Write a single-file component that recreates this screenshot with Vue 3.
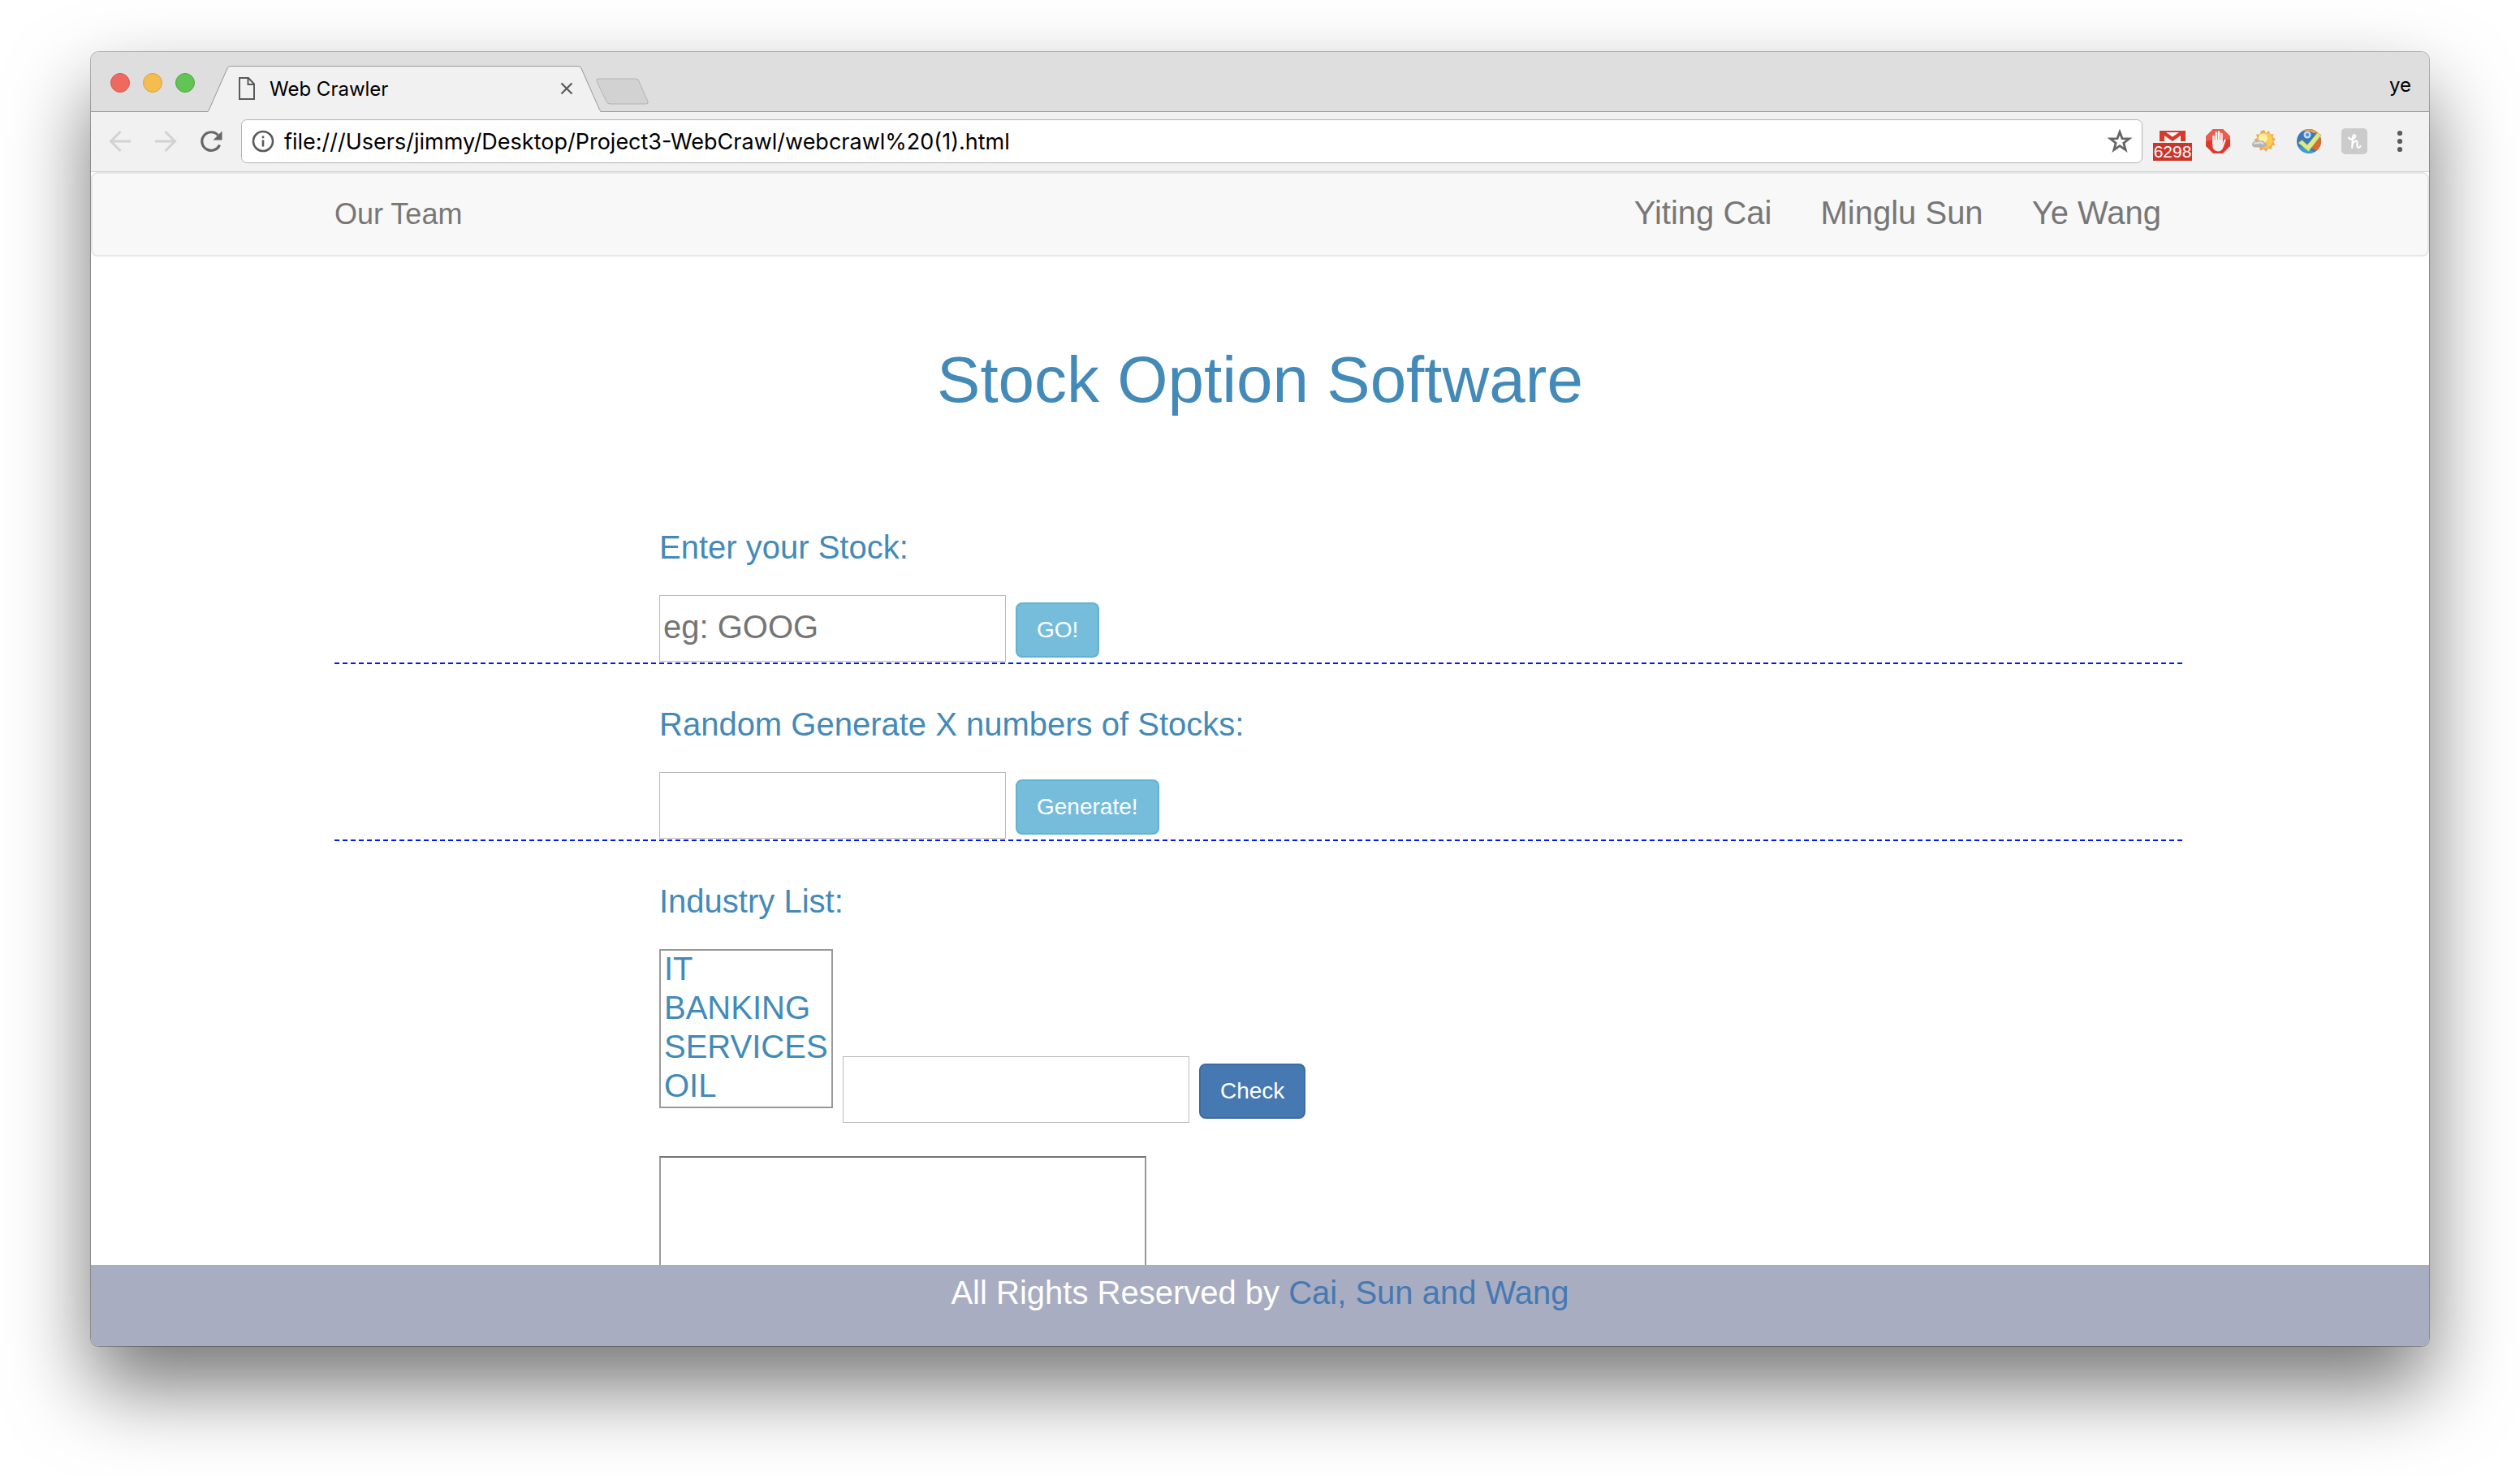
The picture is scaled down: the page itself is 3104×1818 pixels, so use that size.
<script setup>
import { ref } from 'vue'

const url = ref('file:///Users/jimmy/Desktop/Project3-WebCrawl/webcrawl%20(1).html')
const team = ['Yiting Cai', 'Minglu Sun', 'Ye Wang']
const industries = ['IT', 'BANKING', 'SERVICES', 'OIL']
const stock = ref('')
const count = ref('')
const picked = ref([])
const industry = ref('')
const output = ref('')
</script>

<template>
  <div class="desktop">
    <div class="window">
      <header class="tabstrip">
        <div class="lights">
          <button class="light red" aria-label="Close window"></button>
          <button class="light amber" aria-label="Minimize window"></button>
          <button class="light green" aria-label="Zoom window"></button>
        </div>
        <div class="tab">
          <svg class="tab-edge" width="28" height="57" viewBox="0 0 28 57" aria-hidden="true">
            <path d="M0 57 L1 56 L25 3 Q26 0.500 28 0.500 V57 Z" fill="#f1f1f1" />
            <path d="M0 55.500 Q1 55.500 2 53 L24 3 Q25 0.500 28 0.500" fill="none" stroke="#9a9a9a" />
          </svg>
          <div class="tab-body">
            <svg width="20" height="28" viewBox="0 0 20 28" fill="none" stroke="#5a5a5a" stroke-width="2" aria-hidden="true">
              <path d="M1 1 H12 L19 8.500 V27 H1 Z M11.500 1 V9 H19" />
            </svg>
            <span class="tab-title">Web Crawler</span>
            <button class="tab-close" aria-label="Close tab">
              <svg width="16" height="16" viewBox="0 0 16 16" stroke="#5a5a5a" stroke-width="2.200" aria-hidden="true">
                <path d="M1.500 1.500 L14.500 14.500 M14.500 1.500 L1.500 14.500" />
              </svg>
            </button>
          </div>
          <svg class="tab-edge" width="28" height="57" viewBox="0 0 28 57" aria-hidden="true">
            <path d="M28 57 L27 56 L3 3 Q2 0.500 0 0.500 V57 Z" fill="#f1f1f1" />
            <path d="M28 55.500 Q27 55.500 26 53 L4 3 Q3 0.500 0 0.500" fill="none" stroke="#9a9a9a" />
          </svg>
        </div>
        <button class="new-tab" aria-label="New tab">
          <svg width="68" height="34" viewBox="0 0 68 34" aria-hidden="true">
            <path d="M5 1 H51 Q54 1 55 4 L66 29 Q67 32 64 32 H19 Q16 32 15 29 L3 4 Q2 1 5 1 Z" fill="#d2d2d2" stroke="#b2b2b2" />
          </svg>
        </button>
        <span class="profile">ye</span>
      </header>

      <div class="toolbar">
        <div class="history">
          <button class="tool" aria-label="Back">
            <svg width="28" height="28" viewBox="0 0 28 28" fill="none" stroke="#d2d2d2" stroke-width="3" aria-hidden="true">
              <path d="M27 14 H3 M14.500 2 L2.500 14 L14.500 26" />
            </svg>
          </button>
          <button class="tool" aria-label="Forward">
            <svg width="28" height="28" viewBox="0 0 28 28" fill="none" stroke="#d2d2d2" stroke-width="3" aria-hidden="true">
              <path d="M1 14 H25 M13.500 2 L25.500 14 L13.500 26" />
            </svg>
          </button>
          <button class="tool" aria-label="Reload">
            <svg width="28" height="28" viewBox="0 0 28 28" aria-hidden="true">
              <path d="M24.500 18.500 A11.300 11.300 0 1 1 22.500 6.500" fill="none" stroke="#666" stroke-width="3.200" />
              <path d="M27.500 1.500 V12.500 H16.500 Z" fill="#666" />
            </svg>
          </button>
        </div>
        <div class="omnibox">
          <svg width="28" height="28" viewBox="0 0 28 28" aria-hidden="true">
            <circle cx="14" cy="14" r="12" fill="none" stroke="#5a5a5a" stroke-width="2.600" />
            <path d="M12.700 12.500 H15.300 V20.500 H12.700 Z M12.700 7.500 H15.300 V10.200 H12.700 Z" fill="#5a5a5a" />
          </svg>
          <input v-model="url" class="url" type="text" aria-label="Address" />
          <button class="tool" aria-label="Bookmark this page">
            <svg width="30" height="30" viewBox="0 0 30 30" aria-hidden="true">
              <path d="M15 3.500 L18 11.600 L26.500 11.900 L19.800 17.200 L22.200 25.600 L15 20.700 L7.800 25.600 L10.200 17.200 L3.500 11.900 L12 11.600 Z" fill="none" stroke="#666" stroke-width="2.800" />
            </svg>
          </button>
        </div>
        <div class="extensions">
          <button class="ext" aria-label="Mail, 6298 unread">
            <svg width="32" height="32" viewBox="0 0 32 32" aria-hidden="true">
              <path d="M0 3 H32 V16 H0 Z" fill="#fbf3f2" />
              <path d="M0 3 H32 V16 H26 V9 L16 16 L6 9 V16 H0 Z" fill="#d8392b" />
              <path d="M8 5 H24 L16 10.500 Z" fill="#fff" />
              <path d="M0 3 H10 L6 7 H0 Z" fill="#b9463d" opacity="0.600" />
            </svg>
            <span class="badge">6298</span>
          </button>
          <button class="ext" aria-label="Ad blocker">
            <svg width="32" height="32" viewBox="0 0 32 32" aria-hidden="true">
              <path d="M10 1 H22 L31 10 V22 L22 31 H10 L1 22 V10 Z" fill="#db3a2c" />
              <path d="M10 1 H22 L31 10 V14 Q16 12 1 16 V10 Z" fill="#ea5c4e" />
              <path d="M10.500 10 V18 M13.800 5.500 V16 M17.100 4.500 V16 M20.400 7 V17" stroke="#f7f4f3" stroke-width="2.600" stroke-linecap="round" />
              <path d="M9.200 14 H21.700 V19 L23.200 14.500 Q24.800 12.600 26 14 L22.500 23.500 Q20.500 28.500 16 28.500 Q9.200 28 9.200 20 Z" fill="#f0edec" />
            </svg>
          </button>
          <button class="ext" aria-label="Weather">
            <svg width="32" height="32" viewBox="0 0 32 32" aria-hidden="true">
              <path d="M17 2 L19 6 L23 3 L24 7.500 L28.500 7 L27.500 11 L31 13.500 L28 16.500 L30.500 20.500 L26.500 21.500 L26 26 L22 24.500 L19 29 L16.500 25.500 L12 27.500 L11 23 L6 22 L8 17.500 L4 14 L8.500 12 L7 7.500 L11.500 7.500 L13 3.500 Z" fill="#f2a84a" />
              <circle cx="18" cy="15" r="9.500" fill="#fbcb55" />
              <circle cx="15.500" cy="12" r="5.500" fill="#fff0a6" />
              <path d="M5 23.500 Q1.500 22.500 2 19 Q3 15.500 6.500 16 Q9 13 12 15.500 Q16.500 14.500 17.500 18 Q21.500 18.500 20.500 21.500 Q18.500 24 14 23.500 Z" fill="#b4b4b8" />
              <path d="M4 19.500 Q6 17 8.500 18.500 Q12 16 16 19.500" fill="none" stroke="#e2e2e4" stroke-width="2" />
            </svg>
          </button>
          <button class="ext" aria-label="Link checker">
            <svg width="32" height="32" viewBox="0 0 32 32" aria-hidden="true">
              <circle cx="16" cy="16" r="15" fill="#3b78b8" />
              <path d="M18 1 A15 15 0 0 1 25 28 L16 22 L26 8 Z" fill="#d96a35" />
              <path d="M7 4 Q16 -2 26 5 L22 6 Q15 1 7 4 Z" fill="#efa04a" />
              <path d="M3 22 A15 15 0 0 0 23 29.500 L14 25 Z" fill="#35a0d8" />
              <circle cx="14" cy="8" r="4.500" fill="#c4dcf2" />
              <circle cx="14" cy="8" r="2" fill="#4a8bce" />
              <path d="M3 18 L7.500 14.500 L14 20.500 L26.500 5.500 L31 8.500 L15.500 28.500 Z" fill="#dde98c" stroke="#a3b850" stroke-width="0.800" />
            </svg>
          </button>
          <button class="ext" aria-label="Coupons">
            <svg width="32" height="32" viewBox="0 0 32 32" aria-hidden="true">
              <rect width="32" height="32" rx="5" fill="#cbcbcb" />
              <path d="M9 11.500 Q10.500 14.500 14 13 Q18 11.200 17 8.800 Q15.300 6.800 14 10.500 L13.200 24 M13.500 21 Q15 16 17.800 15.500 Q20 15.500 19.500 19 Q19 23.800 21 24 Q22.800 24 23.500 22" fill="none" stroke="#fff" stroke-width="2.200" stroke-linecap="round" stroke-linejoin="round" />
            </svg>
          </button>
          <button class="ext" aria-label="Menu">
            <svg width="8" height="28" viewBox="0 0 8 28" fill="#5a5a5a" aria-hidden="true">
              <circle cx="4" cy="4" r="3.100" />
              <circle cx="4" cy="14" r="3.100" />
              <circle cx="4" cy="24" r="3.100" />
            </svg>
          </button>
        </div>
      </div>

      <div class="page">
        <nav class="navbar">
          <div class="container nav-row">
            <a class="brand" href="#">Our Team</a>
            <div class="nav-links">
              <a v-for="name in team" :key="name" href="#">{{ name }}</a>
            </div>
          </div>
        </nav>

        <main class="container content">
          <h1>Stock Option Software</h1>

          <form class="section ruled" @submit.prevent>
            <label for="stock">Enter your Stock:</label>
            <div class="controls">
              <input id="stock" v-model="stock" class="field" type="text" placeholder="eg: GOOG" />
              <button class="btn info" type="submit">GO!</button>
            </div>
          </form>

          <form class="section ruled" @submit.prevent>
            <label for="count">Random Generate X numbers of Stocks:</label>
            <div class="controls">
              <input id="count" v-model="count" class="field" type="text" />
              <button class="btn info" type="submit">Generate!</button>
            </div>
          </form>

          <form class="section" @submit.prevent>
            <label for="industries">Industry List:</label>
            <div class="controls">
              <select id="industries" v-model="picked" class="list" multiple size="4">
                <option v-for="item in industries" :key="item" :value="item">{{ item }}</option>
              </select>
              <input v-model="industry" class="field" type="text" aria-label="Industry" />
              <button class="btn primary" type="submit">Check</button>
            </div>
            <textarea v-model="output" class="output" aria-label="Results"></textarea>
          </form>
        </main>

        <footer class="footer">All Rights Reserved by <a href="#">Cai, Sun and Wang</a></footer>
      </div>
    </div>
  </div>
</template>

<style>
body {
  margin: 0;
  background: #fff;
}
</style>

<style scoped>
* {
  box-sizing: border-box;
}

button {
  margin: 0;
  padding: 0;
  border: 0;
  background: none;
  font: inherit;
}

a {
  text-decoration: none;
}

svg {
  display: block;
  flex: none;
}

.desktop {
  display: flex;
  height: 100vh;
  padding: 64px 112px 160px;
  font-family: "Liberation Sans", Arial, sans-serif;
}

.window {
  display: flex;
  flex: 1;
  flex-direction: column;
  min-width: 0;
  overflow: hidden;
  border-radius: 10px;
  background: #fff;
  box-shadow: 0 0 0 1px rgba(0, 0, 0, 0.26), 0 50px 100px rgba(0, 0, 0, 0.54);
}

/* Browser chrome */
.tabstrip {
  display: flex;
  flex: none;
  align-items: flex-end;
  height: 74px;
  padding: 0 22px 0 24px;
  background: #dedede;
  box-shadow: inset 0 -1px #9a9a9a;
  font-family: Inter, "Liberation Sans", sans-serif;
  font-size: 24px;
}

.lights {
  display: flex;
  gap: 16px;
  margin: 0 16px 24px 0;
}

.light {
  width: 24px;
  height: 24px;
  border: 1px solid;
  border-radius: 50%;
}

.red {
  border-color: #d9544b;
  background: #ee6a5f;
}

.amber {
  border-color: #dba13d;
  background: #f5bd4f;
}

.green {
  border-color: #4ea83f;
  background: #61c454;
}

.tab {
  display: flex;
  height: 57px;
}

.tab-body {
  display: flex;
  align-items: center;
  width: 428px;
  padding: 0 6px 2px 10px;
  border-top: 1px solid #9a9a9a;
  background: #f1f1f1;
}

.tab-title {
  flex: 1;
  margin-left: 18px;
  color: #000;
}

.new-tab {
  margin: 0 0 8px -8px;
}

.profile {
  margin: 0 0 18px auto;
  line-height: 30px;
}

.toolbar {
  display: flex;
  flex: none;
  align-items: center;
  height: 74px;
  padding: 0 8px 1px 22px;
  border-bottom: 1px solid #cfcfcf;
  background: #f1f1f1;
}

.history {
  display: flex;
  gap: 28px;
  margin-right: 23px;
}

.omnibox {
  display: flex;
  flex: 1;
  align-items: center;
  height: 54px;
  padding: 0 12px;
  border: 1px solid #b4b4b4;
  border-radius: 7px;
  background: #fff;
}

.url {
  flex: 1;
  min-width: 0;
  height: 40px;
  margin: 0 12px;
  padding: 0;
  border: 0;
  outline: 0;
  background: none;
  color: #000;
  font-family: Inter, "Liberation Sans", sans-serif;
  font-size: 27px;
}

.extensions {
  display: flex;
  margin-left: 9px;
}

.ext {
  position: relative;
  display: flex;
  align-items: center;
  justify-content: center;
  width: 56px;
  height: 40px;
}

.badge {
  position: absolute;
  top: 22px;
  left: 4px;
  width: 48px;
  height: 22px;
  background: #cb352b;
  color: #fff;
  font-size: 21px;
  line-height: 22px;
  text-align: center;
}

/* Page */
.page {
  display: flex;
  flex: 1;
  flex-direction: column;
  min-height: 0;
}

.container {
  width: 100%;
  max-width: 2340px;
  margin: 0 auto;
  padding: 0 30px;
}

.navbar {
  flex: none;
  border: 2px solid #e7e7e7;
  border-radius: 8px;
  background: #f8f8f8;
}

.nav-row {
  display: flex;
  align-items: baseline;
  justify-content: space-between;
}

.brand,
.nav-links a {
  color: #777;
}

.brand {
  font-size: 36px;
  line-height: 100px;
}

.nav-links {
  display: flex;
  font-size: 40px;
  line-height: 58px;
}

.nav-links a {
  padding: 0 30px;
}

.content {
  flex: 1;
  min-height: 0;
  overflow: hidden;
  color: #438ab8;
}

h1 {
  margin: 108px 0 88px;
  font-size: 80px;
  font-weight: 400;
  line-height: 88px;
  text-align: center;
}

.section {
  display: flex;
  flex-direction: column;
  padding: 40px 0 3px 400px;
}

.ruled {
  background: repeating-linear-gradient(90deg, #0018f5 0 6px, transparent 6px 10px) bottom / 100% 2px no-repeat;
}

label {
  margin-bottom: 25px;
  font-size: 40px;
  line-height: 68px;
}

.controls {
  display: flex;
  align-items: flex-end;
  gap: 12px;
}

.field {
  width: 427px;
  height: 82px;
  padding: 0 4px 4px;
  border: 1px solid #bbb;
  border-radius: 0;
  background: #fff;
  color: #438ab8;
  font-family: inherit;
  font-size: 40px;
}

.field::placeholder {
  color: #757575;
}

.btn {
  height: 68px;
  margin-bottom: 5px;
  padding: 0 24px;
  border: 2px solid;
  border-radius: 8px;
  color: #fff;
  font-size: 28px;
  line-height: 40px;
}

.info {
  border-color: #62b2d3;
  background: #75bddb;
}

.primary {
  border-color: #3d6ba3;
  background: #4678b2;
}

.list {
  width: 214px;
  height: 196px;
  margin: 0 0 18px;
  padding: 0;
  overflow: hidden;
  appearance: none;
  border: 2px solid #999;
  border-radius: 0;
  background: #fff;
  color: #438ab8;
  font-family: inherit;
  font-size: 40px;
}

.list option {
  height: 48px;
  padding: 0 4px 6px;
  line-height: 42px;
}

.output {
  width: 600px;
  height: 300px;
  margin-top: 41px;
  padding: 4px;
  resize: none;
  border: 2px solid #999;
  border-top-color: #757575;
  border-radius: 0;
  background: #fff;
  color: #438ab8;
  font-family: inherit;
  font-size: 40px;
}

.footer {
  flex: none;
  padding-bottom: 32px;
  background: #a9adc1;
  color: #fff;
  font-size: 40px;
  line-height: 68px;
  text-align: center;
}

.footer a {
  color: #4579b3;
}
</style>
